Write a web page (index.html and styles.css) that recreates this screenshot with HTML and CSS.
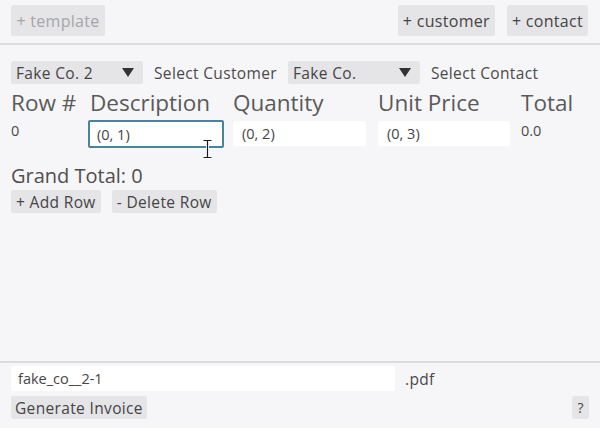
FILE: index.html
```html
<!DOCTYPE html>
<html>
<head>
<meta charset="utf-8">
<link rel="stylesheet" href="styles.css">
</head>
<body>
<div class="app">
  <div class="topbar">
    <button class="btn btn-top disabled">+ template</button>
    <div class="spacer"></div>
    <button class="btn btn-top">+ customer</button>
    <button class="btn btn-top">+ contact</button>
  </div>
  <div class="main">
    <div class="selectors">
      <div class="combo"><span>Fake Co. 2</span><span class="arrow"></span></div>
      <span class="label">Select Customer</span>
      <div class="combo"><span>Fake Co.</span><span class="arrow"></span></div>
      <span class="label">Select Contact</span>
    </div>
    <div class="table">
      <div class="th">Row #</div>
      <div class="th th-desc">Description</div>
      <div class="th">Quantity</div>
      <div class="th">Unit Price</div>
      <div class="th">Total</div>
      <div class="td">0</div>
      <div class="td"><div class="input focused w-desc">(0, 1)</div></div>
      <div class="td"><div class="input w-qty">(0, 2)</div></div>
      <div class="td"><div class="input w-price">(0, 3)</div></div>
      <div class="td">0.0</div>
    </div>
    <div class="grand">Grand Total: 0</div>
    <div class="row-actions">
      <button class="btn btn-small">+ Add Row</button>
      <button class="btn btn-small">- Delete Row</button>
    </div>
  </div>
  <div class="footer">
    <div class="file-row">
      <div class="input file-input">fake_co__2-1</div>
      <span class="label ext">.pdf</span>
    </div>
    <div class="gen-row">
      <button class="btn btn-small btn-gen">Generate Invoice</button>
      <div class="spacer"></div>
      <button class="btn btn-help">?</button>
    </div>
  </div>
  <svg class="cursor" width="11" height="20" viewBox="0 0 11 20">
    <path d="M1.5 1.5 H9.5 M5.5 1.5 V18.5 M1.5 18.5 H9.5" stroke="#ffffff" stroke-width="3" fill="none"/>
    <path d="M1.5 1.5 H9.5 M5.5 1.5 V18.5 M1.5 18.5 H9.5" stroke="#1a1a1a" stroke-width="1.2" fill="none"/>
  </svg>
</div>
</body>
</html>
```

FILE: styles.css
```css
* { box-sizing: border-box; }
html, body { margin: 0; padding: 0; }
body {
  background: #f6f5f8;
  font-family: "Open Sans", "Noto Sans", sans-serif;
  color: #4a4a4a;
}
.app {
  position: relative;
  width: 600px;
  height: 428px;
  display: flex;
  flex-direction: column;
}
.spacer { flex: 1; }
.btn {
  font-family: inherit;
  border: none;
  background: #e5e4e7;
  color: #454545;
  border-radius: 2px;
  padding: 0;
  margin: 0;
}
.topbar {
  display: flex;
  gap: 12px;
  padding: 5px 12px 0 11px;
  height: 45px;
  border-bottom: 2px solid #dcdbde;
  align-items: flex-start;
}
.btn-top {
  height: 31px;
  font-size: 16px;
  letter-spacing: 0.3px;
  padding: 0 5px;
}
.btn-top.disabled { color: #a6a6a8; width: 94px; }
.main {
  flex: 1;
  padding: 16px 0 0 11px;
  display: flex;
  flex-direction: column;
}
.selectors {
  display: flex;
  align-items: center;
  height: 23px;
}
.combo {
  width: 132px;
  height: 23px;
  background: #e5e4e7;
  border-radius: 2px;
  display: flex;
  align-items: center;
  justify-content: space-between;
  padding: 0 9px 0 5px;
  font-size: 15.5px;
  letter-spacing: 0.35px;
  color: #454545;
}
.arrow {
  width: 0; height: 0;
  border-left: 6px solid transparent;
  border-right: 6px solid transparent;
  border-top: 9px solid #333;
}
.label {
  font-size: 15.5px;
  letter-spacing: 0.35px;
  color: #4a4a4a;
  margin: 0 11px;
}
.table {
  display: grid;
  grid-template-columns: 77px 145px 145px 143px auto;
  margin-top: 4px;
}
.th {
  font-size: 22.5px;
  color: #5a5a5a;
  height: 30px;
  line-height: 30px;
}
.th-desc { padding-left: 2px; }
.td {
  font-size: 14.5px;
  color: #4a4a4a;
  height: 30px;
  padding-top: 3px;
}
.input {
  background: #ffffff;
  height: 25px;
  border-radius: 2px;
  font-size: 14.5px;
  color: #454545;
  padding: 0 8px;
  display: flex;
  align-items: center;
  border: 1px solid #ffffff;
}
.input.focused { border: 2px solid #4a8498; padding: 0 7px; height: 28px; margin-top: -1px; }
.w-desc { width: 136px; }
.w-qty { width: 133px; }
.w-price { width: 132px; }
.grand {
  font-size: 20px;
  color: #4f4f4f;
  margin-top: 14px;
  height: 27px;
  line-height: 27px;
}
.row-actions {
  display: flex;
  gap: 11px;
  margin-top: 1px;
}
.btn-small {
  height: 23px;
  font-size: 15.5px;
  letter-spacing: 0.35px;
  padding: 0 5px;
}
.btn-gen { padding: 0 4px; }
.footer {
  border-top: 2px solid #dcdbde;
  padding: 3px 11px 0 11px;
  height: 67px;
}
.file-row {
  display: flex;
  align-items: center;
  height: 25px;
}
.file-input { width: 384px; padding-left: 6px; }
.ext { margin-left: 10px; }
.gen-row {
  display: flex;
  margin-top: 5px;
}
.btn-help {
  width: 17px;
  height: 23px;
  font-size: 14px;
}
.cursor {
  position: absolute;
  left: 202px;
  top: 139px;
}
```
